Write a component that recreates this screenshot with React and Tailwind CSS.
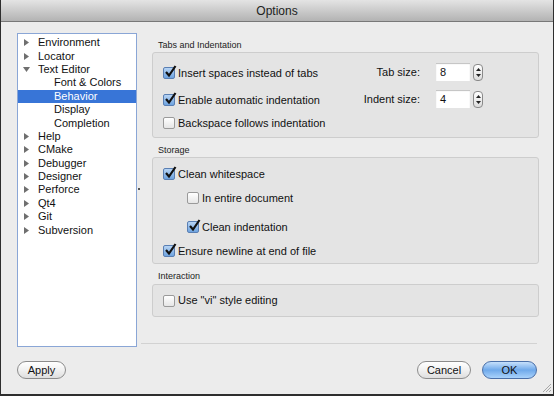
import React from "react";

const tree = [
  { label: "Environment", arrow: "right" },
  { label: "Locator", arrow: "right" },
  { label: "Text Editor", arrow: "down" },
  { label: "Font & Colors", child: true },
  { label: "Behavior", child: true, selected: true },
  { label: "Display", child: true },
  { label: "Completion", child: true },
  { label: "Help", arrow: "right" },
  { label: "CMake", arrow: "right" },
  { label: "Debugger", arrow: "right" },
  { label: "Designer", arrow: "right" },
  { label: "Perforce", arrow: "right" },
  { label: "Qt4", arrow: "right" },
  { label: "Git", arrow: "right" },
  { label: "Subversion", arrow: "right" },
];

function Arrow({ dir }) {
  return (
    <svg width="7" height="7" viewBox="0 0 7 7" className="shrink-0">
      {dir === "down" ? (
        <path d="M0 1 L7 1 L3.5 6 Z" fill="#6f6f6f" />
      ) : (
        <path d="M1 0 L6 3.5 L1 7 Z" fill="#6f6f6f" />
      )}
    </svg>
  );
}

function Check({ checked }) {
  return (
    <span
      className={
        "relative inline-block h-[12px] w-[12px] shrink-0 rounded-[2px] border " +
        (checked
          ? "border-[#5a7fb3] bg-gradient-to-b from-[#b7d4f4] to-[#6ea3df]"
          : "border-[#9a9a9a] bg-gradient-to-b from-white to-[#e6e6e6]")
      }
    >
      {checked && (
        <svg width="13" height="13" viewBox="0 0 13 13" className="absolute -top-[3px] left-[0px]">
          <path d="M2 7 L5 10.5 L11.5 1" fill="none" stroke="#111" strokeWidth="2.2" />
        </svg>
      )}
    </span>
  );
}

function CheckRow({ checked, label, className = "" }) {
  return (
    <div className={"flex items-center gap-[3px] " + className}>
      <Check checked={checked} />
      <span>{label}</span>
    </div>
  );
}

function Spin({ value }) {
  return (
    <div className="flex items-center gap-[3px]">
      <div className="flex h-[18px] w-[34px] items-center bg-white pl-[4px] shadow-[inset_0_1px_1px_rgba(0,0,0,0.25)]">
        {value}
      </div>
      <div className="flex h-[17px] w-[10px] flex-col items-center justify-center gap-[3px] rounded-[4px] border border-[#8a8a8a] bg-gradient-to-b from-white to-[#dcdcdc]">
        <svg width="5" height="3" viewBox="0 0 5 3">
          <path d="M0 3 L2.5 0 L5 3 Z" fill="#222" />
        </svg>
        <svg width="5" height="3" viewBox="0 0 5 3">
          <path d="M0 0 L2.5 3 L5 0 Z" fill="#222" />
        </svg>
      </div>
    </div>
  );
}

function Group({ title, className = "", children }) {
  return (
    <div className="flex flex-col">
      <div className="h-[13px] pl-[6px] text-[9px] leading-[13px] text-[#222]">{title}</div>
      <div className={"rounded-[3px] border border-[#cdcdcd] bg-[#e4e4e4] " + className}>{children}</div>
    </div>
  );
}

function Button({ children, primary, className = "" }) {
  return (
    <button
      className={
        "flex h-[18px] items-center justify-center rounded-full border text-[11px] " +
        (primary
          ? "border-[#4a6fa8] bg-gradient-to-b from-[#c6e0fb] via-[#6fa9ea] to-[#a9d2fb] text-[#111]"
          : "border-[#8c8c8c] bg-gradient-to-b from-white via-[#f1f1f1] to-[#dedede] text-[#111]") +
        " " +
        className
      }
    >
      {children}
    </button>
  );
}

export default function App() {
  return (
    <div
      className="relative h-[396px] w-[554px] overflow-hidden border-x border-b-2 border-[#2e2e2e] bg-[#ececec] text-[11px] text-[#111]"
      style={{ fontFamily: '"Liberation Sans", Arial, sans-serif' }}
    >
      <div className="flex h-[22px] items-center justify-center border-b border-[#787878] bg-gradient-to-b from-[#e4e4e4] to-[#b3b3b3] text-[12px] text-[#222]">
        Options
      </div>

      <div className="flex pl-[16px] pt-[11px]">
        <div className="h-[314px] w-[120px] border border-[#8aa6d6] bg-white pt-[2px]">
          {tree.map((item) => (
            <div
              key={item.label}
              className={
                "flex h-[13.4px] items-center leading-none " +
                (item.selected ? "bg-[#3875d7] text-white" : "")
              }
            >
              <div className="flex w-[20px] justify-end pr-[8px]">{item.arrow && <Arrow dir={item.arrow} />}</div>
              <span className={item.child ? "pl-[16px]" : ""}>{item.label}</span>
            </div>
          ))}
        </div>

        <div className="flex w-[4px] items-start justify-center pt-[155px]">
          <span className="h-[2px] w-[2px] bg-[#555]" />
        </div>

        <div className="flex w-[398px] flex-col pt-[6px]">
          <div className="flex flex-col gap-[6px] pl-[11px]">
            <Group title="Tabs and Indentation" className="h-[86px]">
              <div className="flex h-full">
                <div className="flex flex-col pl-[10px] pt-[13px]">
                  <CheckRow checked label="Insert spaces instead of tabs" className="h-[14px]" />
                  <CheckRow checked label="Enable automatic indentation" className="mt-[13px] h-[14px]" />
                  <CheckRow label="Backspace follows indentation" className="mt-[9px] h-[14px]" />
                </div>
                <div className="ml-auto mr-[55px] mt-[10px] grid grid-cols-[auto_auto] content-start items-center gap-x-[16px] gap-y-[9px]">
                  <span className="justify-self-end">Tab size:</span>
                  <Spin value="8" />
                  <span className="justify-self-end">Indent size:</span>
                  <Spin value="4" />
                </div>
              </div>
            </Group>

            <Group title="Storage" className="h-[107px]">
              <div className="flex flex-col pl-[10px] pt-[9px]">
                <CheckRow checked label="Clean whitespace" className="h-[14px]" />
                <CheckRow label="In entire document" className="mt-[10px] h-[14px] pl-[24px]" />
                <CheckRow checked label="Clean indentation" className="mt-[15px] h-[14px] pl-[24px]" />
                <CheckRow checked label="Ensure newline at end of file" className="mt-[10px] h-[14px]" />
              </div>
            </Group>

            <Group title="Interaction" className="mt-[1px] h-[33px]">
              <div className="flex h-full items-center pl-[10px]">
                <CheckRow label='Use "vi" style editing' className="h-[14px]" />
              </div>
            </Group>
          </div>
          <div className="mt-[26px] mr-[2px] h-px bg-[#d2d2d2]" />
        </div>
      </div>

      <div className="mt-[14px] flex items-center px-[16px]">
        <Button className="w-[49px]">Apply</Button>
        <div className="ml-auto flex gap-[11px]">
          <Button className="w-[54px]">Cancel</Button>
          <Button primary className="w-[55px]">
            OK
          </Button>
        </div>
      </div>

      <svg width="12" height="12" viewBox="0 0 12 12" className="absolute bottom-[1px] right-[1px]">
        <path d="M11 3 L3 11 M11 6 L6 11 M11 9 L9 11" stroke="#a8a8a8" strokeWidth="1" />
      </svg>
    </div>
  );
}
